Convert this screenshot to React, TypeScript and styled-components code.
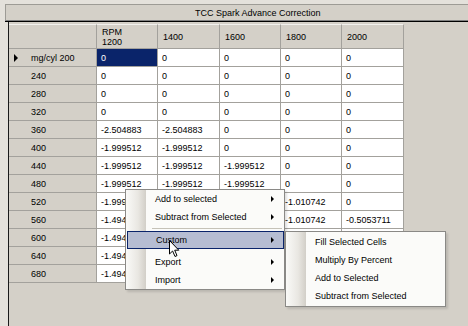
import { Fragment } from 'react'
import styled, { createGlobalStyle } from 'styled-components'

const GlobalStyle = createGlobalStyle`
  html, body {
    margin: 0;
    padding: 0;
    background: #e4e1db;
  }
  body {
    font-family: "Liberation Sans", Arial, sans-serif;
    font-size: 9px;
    color: #000;
  }
`

const SPage = styled.div`
  position: relative;
  width: 468px;
  height: 326px;
  overflow: hidden;
  display: flex;
  flex-direction: column;
  background: #e4e1db;
`

const STopStrip = styled.div`
  height: 4px;
  flex: none;
`

const STitleBar = styled.div`
  flex: none;
  margin-left: 5px;
  height: 15px;
  background: #d4d0c8;
  border-top: 1px solid #9d9b95;
  border-left: 1px solid #9d9b95;
  border-bottom: 1px solid #808080;
  box-shadow: 0 1px 0 #000;
  display: flex;
  align-items: center;
  padding-left: 189px;
`

const STitleText = styled.span`
  font-size: 9px;
  white-space: nowrap;
`

const SGridArea = styled.div`
  flex: 1;
  margin-left: 8px;
  margin-top: 1px;
  padding-top: 2px;
  background: #d4d0c8;
  border-left: 1px solid #1a1a1a;
`

const SGrid = styled.div`
  display: grid;
  grid-template-columns: 88px 61px 62px 61px 61px 62px;
  grid-template-rows: 25px;
  grid-auto-rows: 18px;
  width: 395px;
`

const SHeaderCell = styled.div`
  box-sizing: border-box;
  background: #d4d0c8;
  border-right: 1px solid #a3a19c;
  border-bottom: 1px solid #a3a19c;
  border-top: 1px solid #f2f1ee;
  padding-left: 5px;
  display: flex;
  align-items: center;
  line-height: 10px;
  white-space: nowrap;
`

const SRowHeader = styled.div`
  box-sizing: border-box;
  position: relative;
  background: #d4d0c8;
  border-right: 1px solid #a3a19c;
  border-bottom: 1px solid #a3a19c;
  padding-left: 22px;
  display: flex;
  align-items: center;
  white-space: nowrap;
`

const SRowIndicator = styled.span`
  position: absolute;
  left: 5px;
  top: 5px;
  width: 0;
  height: 0;
  border-left: 4px solid #000;
  border-top: 4px solid transparent;
  border-bottom: 4px solid transparent;
`

const SDataCell = styled.div<{ selected?: boolean }>`
  box-sizing: border-box;
  background: ${p => (p.selected ? '#0a246a' : '#fff')};
  color: ${p => (p.selected ? '#fff' : '#000')};
  border-right: 1px solid #a3a19c;
  border-bottom: 1px solid #a3a19c;
  padding-left: 4px;
  display: flex;
  align-items: center;
  white-space: nowrap;
  overflow: hidden;
`

const SMenu = styled.div<{ left: number; top: number; width: number; pad?: boolean }>`
  position: absolute;
  left: ${p => p.left}px;
  top: ${p => p.top}px;
  width: ${p => p.width}px;
  box-sizing: border-box;
  background: #fbfbf9;
  border: 1px solid #8a8986;
  box-shadow: 2px 2px 2px rgba(0, 0, 0, 0.12);
  padding: ${p => (p.pad ? '1px 0' : '0')};
  &::before {
    content: '';
    position: absolute;
    left: 0;
    top: 0;
    bottom: 0;
    width: 20px;
    background: linear-gradient(to right, #fafaf8, #e9e7e2 60%, #d2cfc8);
  }
`

const SMenuItem = styled.div<{ active?: boolean }>`
  position: relative;
  box-sizing: border-box;
  height: 18px;
  display: flex;
  align-items: center;
  padding-left: 28px;
  margin: ${p => (p.active ? '0 0 0 1px' : '0')};
  white-space: nowrap;
  background: ${p => (p.active ? '#b6bdd2' : 'transparent')};
  border: ${p => (p.active ? '1px solid #0a246a' : '1px solid transparent')};
  z-index: 1;
`

const SSubArrow = styled.span`
  position: absolute;
  right: 9px;
  top: 5px;
  width: 0;
  height: 0;
  border-left: 3px solid #000;
  border-top: 3px solid transparent;
  border-bottom: 3px solid transparent;
`

const SSeparator = styled.div<{ line?: boolean }>`
  position: relative;
  height: ${p => (p.line ? 5 : 4)}px;
  &::after {
    content: '';
    display: ${p => (p.line ? 'block' : 'none')};
    position: absolute;
    left: 26px;
    right: 2px;
    top: 2px;
    height: 1px;
    background: #c5c2b8;
  }
`

const SCursor = styled.svg`
  position: absolute;
  left: 169px;
  top: 240px;
  z-index: 5;
`

// cells that sit fully under the open menus are left blank
const zeros = ['0', '0', '0', '0', '0']
const rows: [string, string[]][] = [
  ['mg/cyl 200', zeros],
  ['240', zeros],
  ['280', zeros],
  ['320', zeros],
  ['360', ['-2.504883', '-2.504883', '0', '0', '0']],
  ['400', ['-1.999512', '-1.999512', '0', '0', '0']],
  ['440', ['-1.999512', '-1.999512', '-1.999512', '0', '0']],
  ['480', ['-1.999512', '-1.999512', '-1.999512', '0', '0']],
  ['520', ['-1.999', '', '', '-1.010742', '0']],
  ['560', ['-1.494', '', '', '-1.010742', '-0.5053711']],
  ['600', ['-1.494', '', '', '', '']],
  ['640', ['-1.494', '', '', '', '']],
  ['680', ['-1.494', '', '', '', '']],
]

const columns = ['1400', '1600', '1800', '2000']

const App = () => {
  return (
    <SPage>
      <GlobalStyle />
      <STopStrip />
      <STitleBar>
        <STitleText>TCC Spark Advance Correction</STitleText>
      </STitleBar>
      <SGridArea>
        <SGrid>
          <SHeaderCell />
          <SHeaderCell>
            RPM
            <br />
            1200
          </SHeaderCell>
          {columns.map(c => (
            <SHeaderCell key={c}>{c}</SHeaderCell>
          ))}
          {rows.map(([label, values], r) => (
            <Fragment key={label}>
              <SRowHeader>
                {r === 0 && <SRowIndicator />}
                {label}
              </SRowHeader>
              {values.map((v, c) => (
                <SDataCell key={c} selected={r === 0 && c === 0}>
                  {v}
                </SDataCell>
              ))}
            </Fragment>
          ))}
        </SGrid>
      </SGridArea>

      <SMenu left={125} top={189} width={160}>
        <SMenuItem>
          Add to selected
          <SSubArrow />
        </SMenuItem>
        <SMenuItem>
          Subtract from Selected
          <SSubArrow />
        </SMenuItem>
        <SSeparator line />
        <SMenuItem active>
          Custom
          <SSubArrow />
        </SMenuItem>
        <SSeparator />
        <SMenuItem>
          Export
          <SSubArrow />
        </SMenuItem>
        <SMenuItem>
          Import
          <SSubArrow />
        </SMenuItem>
      </SMenu>

      <SMenu left={285} top={231} width={161} pad>
        <SMenuItem>Fill Selected Cells</SMenuItem>
        <SMenuItem>Multiply By Percent</SMenuItem>
        <SMenuItem>Add to Selected</SMenuItem>
        <SMenuItem>Subtract from Selected</SMenuItem>
      </SMenu>

      <SCursor width="12" height="18" viewBox="0 0 12 18">
        <path
          d="M0.5 0.5 L0.5 14 L3.6 11 L6 16.5 L8 15.6 L5.7 10.2 L9.8 10.2 Z"
          fill="#fff"
          stroke="#000"
          strokeWidth="1"
          strokeLinejoin="round"
        />
      </SCursor>
    </SPage>
  )
}

export default App
